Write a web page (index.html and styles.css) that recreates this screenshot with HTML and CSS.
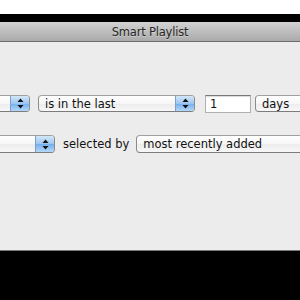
FILE: index.html
```html
<!DOCTYPE html>
<html lang="en">
<head>
    <meta charset="UTF-8">
    <title>Smart Playlist</title>
    <link rel="stylesheet" href="styles.css">
</head>
<body>
    <div class="topo"></div>
    <div class="faixa"></div>

    <div class="janela">
        <div class="titulo">Smart Playlist</div>

        <div class="conteudo">
            <!-- Linha da regra -->
            <div class="linha linha-regra">
                <div class="popup popup-campo">
                    <span class="rotulo"></span>
                    <span class="setas"><svg width="7" height="11" viewBox="0 0 7 11"><path d="M3.5 0.5 L6.5 4 L0.5 4 Z M3.5 10.5 L6.5 7 L0.5 7 Z" fill="#111"/></svg></span>
                </div>
                <div class="popup popup-operador">
                    <span class="rotulo">is in the last</span>
                    <span class="setas"><svg width="7" height="11" viewBox="0 0 7 11"><path d="M3.5 0.5 L6.5 4 L0.5 4 Z M3.5 10.5 L6.5 7 L0.5 7 Z" fill="#111"/></svg></span>
                </div>
                <div class="campo-texto">1</div>
                <div class="popup popup-unidade">
                    <span class="rotulo">days</span>
                </div>
            </div>

            <!-- Linha do limite -->
            <div class="linha linha-limite">
                <div class="popup popup-limite">
                    <span class="rotulo"></span>
                    <span class="setas"><svg width="7" height="11" viewBox="0 0 7 11"><path d="M3.5 0.5 L6.5 4 L0.5 4 Z M3.5 10.5 L6.5 7 L0.5 7 Z" fill="#111"/></svg></span>
                </div>
                <span class="texto">selected by</span>
                <div class="popup popup-ordem">
                    <span class="rotulo">most recently added</span>
                </div>
            </div>
        </div>
    </div>

    <div class="rodape"></div>
</body>
</html>
```

FILE: styles.css
```css
/* Fundo geral */
body {
  margin: 0;
  padding: 0;
  font-family: "DejaVu Sans", Verdana, sans-serif;
  background-color: #000;
  overflow: hidden;
  height: 300px;
}

.topo {
  height: 14px;
  background-color: #fff;
}

.faixa {
  height: 8px;
  background-color: #000;
}

/* Janela */
.janela {
  overflow: hidden;
}

.titulo {
  height: 19px;
  line-height: 20px;
  text-align: center;
  font-size: 11.5px;
  letter-spacing: -0.2px;
  color: #262626;
  background: linear-gradient(#d2d2d2, #bcbcbc 55%, #aaaaaa);
  border-bottom: 1px solid #6c6c6c;
  text-shadow: 0 1px 0 rgba(255, 255, 255, 0.35);
}

.conteudo {
  height: 209px;
  background-color: #ececec;
  border-bottom: 1px solid #7a7a7a;
  padding-top: 53px;
  box-sizing: border-box;
  display: flex;
  flex-direction: column;
  gap: 23px;
}

/* Linhas de controles */
.linha {
  display: flex;
  align-items: center;
  height: 17px;
  font-size: 11.5px;
  color: #111;
}

.linha-regra {
  margin-left: -60px;
}

.linha-limite {
  margin-left: -60px;
  height: 18px;
}

/* Menus popup */
.popup {
  height: 17px;
  box-sizing: border-box;
  border: 1px solid #8c8c8c;
  border-top-color: #a0a0a0;
  border-bottom-color: #7c7c7c;
  border-radius: 4px;
  background: linear-gradient(#ffffff, #f6f6f6 50%, #ececec 51%, #f7f7f7);
  display: flex;
  align-items: center;
  overflow: hidden;
  flex-shrink: 0;
}

.popup .rotulo {
  flex: 1;
  padding-left: 6px;
  white-space: nowrap;
}

.popup .setas {
  width: 18px;
  height: 100%;
  display: flex;
  align-items: center;
  justify-content: center;
  background: linear-gradient(#d4e7f9, #9cc6f1 50%, #74aeee 51%, #b4d8f8);
  border-left: 1px solid #7f9fca;
}

.popup-campo {
  width: 90px;
}

.popup-operador {
  width: 157px;
  margin-left: 8px;
}

.campo-texto {
  width: 46px;
  height: 18px;
  box-sizing: border-box;
  margin-left: 10px;
  padding-left: 4px;
  line-height: 16px;
  background-color: #fff;
  border: 1px solid #b0b0b0;
  border-top-color: #777;
  box-shadow: inset 0 1px 1px rgba(0, 0, 0, 0.15);
  flex-shrink: 0;
}

.popup-unidade {
  width: 90px;
  margin-left: 4px;
}

.popup-limite {
  width: 115px;
  height: 18px;
}

.texto {
  margin-left: 8px;
  white-space: nowrap;
}

.popup-ordem {
  width: 200px;
  height: 18px;
  margin-left: 7px;
}

.rodape {
  height: 50px;
  background-color: #000;
}
```
